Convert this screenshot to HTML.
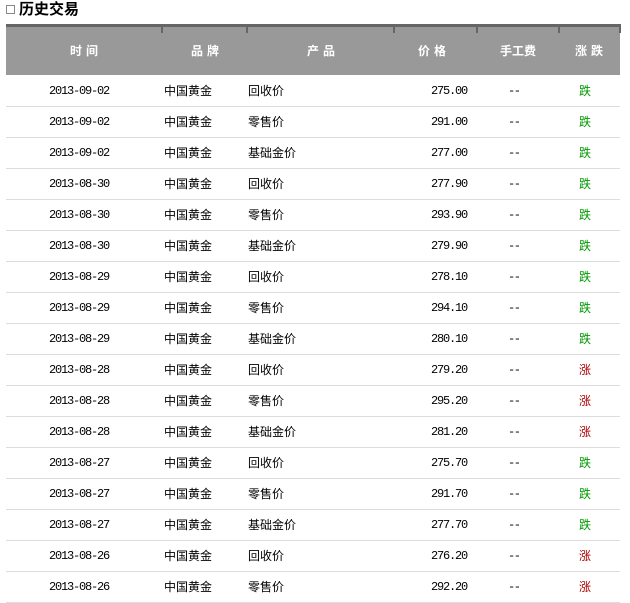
<!DOCTYPE html>
<html><head><meta charset="utf-8"><style>
body{margin:0;width:630px;height:601px;overflow:hidden;background:#fff;font-family:"Liberation Sans","Noto Sans CJK SC",sans-serif;font-size:12px;color:#000;position:relative}
.t{position:absolute;left:19px;top:1px;font-size:15px;font-weight:bold;line-height:18px}
.box{position:absolute;left:6px;top:5px;width:7px;height:7px;border:1px solid #888}
.hd{position:absolute;left:6px;top:24px;width:614px;height:51px;background:#999;border-top:3px solid #666;box-sizing:border-box}
.sep{position:absolute;top:24px;width:2px;height:9px;background:#666}
.h{position:absolute;top:42px;color:#fff;font-weight:bold;font-size:12px;transform:translateX(-50%);white-space:nowrap;letter-spacing:4px}
.r{position:absolute;left:6px;width:614px;height:31px;border-bottom:1px solid #ddd;box-sizing:border-box}
.r span{position:absolute;top:8px;line-height:14px;white-space:nowrap}
.d{left:43px;font-family:"Liberation Mono",monospace;letter-spacing:-1.2px}
.b{left:158px}.p{left:242px}
.pr{right:153px;font-family:"Liberation Mono",monospace;letter-spacing:-1.2px}
.f{left:502px;font-family:"Liberation Mono",monospace;letter-spacing:-1.5px}
.c{left:573px}
.g{color:#090}.red{color:#a00}
</style></head><body>
<div class="box"></div><div class="t">历史交易</div>
<div class="hd"></div>
<div class="sep" style="left:161px"></div><div class="sep" style="left:246px"></div><div class="sep" style="left:393px"></div><div class="sep" style="left:476px"></div><div class="sep" style="left:558px"></div><div class="sep" style="left:619px"></div>
<div class="h" style="left:86px">时间</div>
<div class="h" style="left:207px">品牌</div>
<div class="h" style="left:323px">产品</div>
<div class="h" style="left:434px">价格</div>
<div class="h" style="left:518px;letter-spacing:0">手工费</div>
<div class="h" style="left:591px">涨跌</div>
<div class="r" style="top:76px"><span class="d">2013-09-02</span><span class="b">中国黄金</span><span class="p">回收价</span><span class="pr">275.00</span><span class="f">--</span><span class="c g">跌</span></div>
<div class="r" style="top:107px"><span class="d">2013-09-02</span><span class="b">中国黄金</span><span class="p">零售价</span><span class="pr">291.00</span><span class="f">--</span><span class="c g">跌</span></div>
<div class="r" style="top:138px"><span class="d">2013-09-02</span><span class="b">中国黄金</span><span class="p">基础金价</span><span class="pr">277.00</span><span class="f">--</span><span class="c g">跌</span></div>
<div class="r" style="top:169px"><span class="d">2013-08-30</span><span class="b">中国黄金</span><span class="p">回收价</span><span class="pr">277.90</span><span class="f">--</span><span class="c g">跌</span></div>
<div class="r" style="top:200px"><span class="d">2013-08-30</span><span class="b">中国黄金</span><span class="p">零售价</span><span class="pr">293.90</span><span class="f">--</span><span class="c g">跌</span></div>
<div class="r" style="top:231px"><span class="d">2013-08-30</span><span class="b">中国黄金</span><span class="p">基础金价</span><span class="pr">279.90</span><span class="f">--</span><span class="c g">跌</span></div>
<div class="r" style="top:262px"><span class="d">2013-08-29</span><span class="b">中国黄金</span><span class="p">回收价</span><span class="pr">278.10</span><span class="f">--</span><span class="c g">跌</span></div>
<div class="r" style="top:293px"><span class="d">2013-08-29</span><span class="b">中国黄金</span><span class="p">零售价</span><span class="pr">294.10</span><span class="f">--</span><span class="c g">跌</span></div>
<div class="r" style="top:324px"><span class="d">2013-08-29</span><span class="b">中国黄金</span><span class="p">基础金价</span><span class="pr">280.10</span><span class="f">--</span><span class="c g">跌</span></div>
<div class="r" style="top:355px"><span class="d">2013-08-28</span><span class="b">中国黄金</span><span class="p">回收价</span><span class="pr">279.20</span><span class="f">--</span><span class="c red">涨</span></div>
<div class="r" style="top:386px"><span class="d">2013-08-28</span><span class="b">中国黄金</span><span class="p">零售价</span><span class="pr">295.20</span><span class="f">--</span><span class="c red">涨</span></div>
<div class="r" style="top:417px"><span class="d">2013-08-28</span><span class="b">中国黄金</span><span class="p">基础金价</span><span class="pr">281.20</span><span class="f">--</span><span class="c red">涨</span></div>
<div class="r" style="top:448px"><span class="d">2013-08-27</span><span class="b">中国黄金</span><span class="p">回收价</span><span class="pr">275.70</span><span class="f">--</span><span class="c g">跌</span></div>
<div class="r" style="top:479px"><span class="d">2013-08-27</span><span class="b">中国黄金</span><span class="p">零售价</span><span class="pr">291.70</span><span class="f">--</span><span class="c g">跌</span></div>
<div class="r" style="top:510px"><span class="d">2013-08-27</span><span class="b">中国黄金</span><span class="p">基础金价</span><span class="pr">277.70</span><span class="f">--</span><span class="c g">跌</span></div>
<div class="r" style="top:541px"><span class="d">2013-08-26</span><span class="b">中国黄金</span><span class="p">回收价</span><span class="pr">276.20</span><span class="f">--</span><span class="c red">涨</span></div>
<div class="r" style="top:572px"><span class="d">2013-08-26</span><span class="b">中国黄金</span><span class="p">零售价</span><span class="pr">292.20</span><span class="f">--</span><span class="c red">涨</span></div>
</body></html>
